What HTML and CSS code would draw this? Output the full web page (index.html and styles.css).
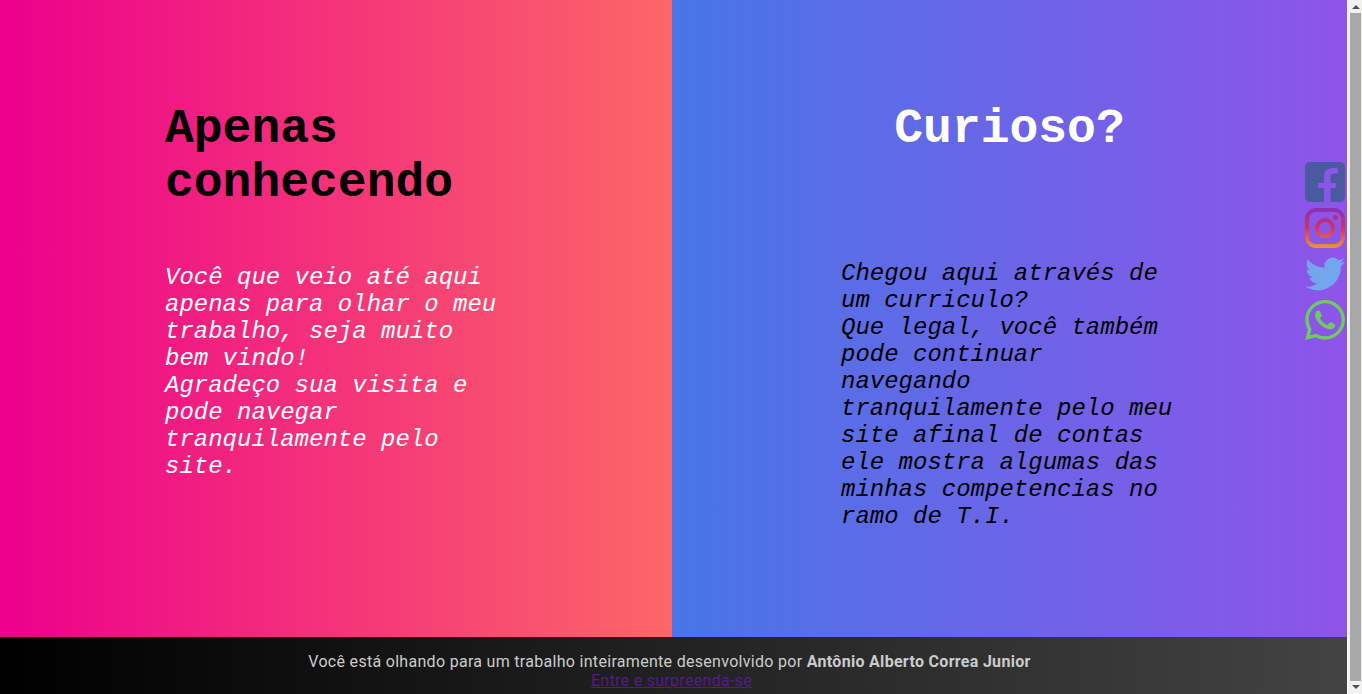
FILE: index.html
```html
<!DOCTYPE html>
<html lang="pt-BR">
<head>
<meta charset="utf-8">
<title>Antônio Alberto Correa Junior</title>
<link rel="stylesheet" href="styles.css">
</head>
<body>
<div class="page">
<main class="split">
  <section class="panel panel-left">
    <div class="block">
      <h1 class="title">Apenas conhecendo</h1>
      <p class="text text-light">Você que veio até aqui apenas para olhar o meu trabalho, seja muito bem vindo!<br>Agradeço sua visita e pode navegar tranquilamente pelo site.</p>
    </div>
  </section>
  <section class="panel panel-right">
    <div class="block">
      <h1 class="title title-light">Curioso?</h1>
      <p class="text text-dark">Chegou aqui através de um curriculo?<br>Que legal, você também pode continuar navegando tranquilamente pelo meu site afinal de contas ele mostra algumas das minhas competencias no ramo de T.I.</p>
    </div>
  </section>
</main>
<footer class="footer">
  <div class="footer-line">Você está olhando para um trabalho inteiramente desenvolvido por <strong>Antônio Alberto Correa Junior</strong></div>
  <a class="footer-link" href="#">Entre e surpreenda-se</a>
</footer>
</div>
<aside class="scrollbar" aria-hidden="true">
  <span class="arrow arrow-up"></span>
  <span class="thumb"></span>
  <span class="arrow arrow-down"></span>
</aside>
<nav class="social">
  <a class="social-link" href="#" aria-label="Facebook">
    <svg class="icon" viewBox="0 0 40 40"><path fill="#4a5a9e" fill-rule="evenodd" d="M5 0H35A5 5 0 0 1 40 5V35A5 5 0 0 1 35 40H25.5V26H30.5L31.3 21H25.5V15.5C25.5 13 26.5 11.5 29 11.5H33V6.3C31.5 6.1 30 6 28 6C22.8 6 19 9 19 15V21H13V26H19V40H5A5 5 0 0 1 0 35V5A5 5 0 0 1 5 0Z"/></svg>
  </a>
  <a class="social-link" href="#" aria-label="Instagram">
    <svg class="icon" viewBox="0 0 40 40">
      <defs><linearGradient id="ig" x1="0" y1="0" x2="0" y2="1"><stop offset="0" stop-color="#8a2fb5"/><stop offset=".5" stop-color="#d6305f"/><stop offset="1" stop-color="#e9953a"/></linearGradient></defs>
      <path fill="url(#ig)" fill-rule="evenodd" d="M11 0h18a11 11 0 0 1 11 11v18a11 11 0 0 1-11 11H11A11 11 0 0 1 0 29V11A11 11 0 0 1 11 0zm0 4a7 7 0 0 0-7 7v18a7 7 0 0 0 7 7h18a7 7 0 0 0 7-7V11a7 7 0 0 0-7-7zm9 6a10 10 0 1 1 0 20 10 10 0 0 1 0-20zm0 4a6 6 0 1 0 0 12 6 6 0 0 0 0-12zm10.5-7a2.5 2.5 0 1 1 0 5 2.5 2.5 0 0 1 0-5z"/>
    </svg>
  </a>
  <a class="social-link" href="#" aria-label="Twitter">
    <svg class="icon" viewBox="0 0 24 24"><path fill="#73a6ec" d="M23.953 4.57a10 10 0 01-2.825.775 4.958 4.958 0 002.163-2.723c-.951.555-2.005.959-3.127 1.184a4.92 4.92 0 00-8.384 4.482C7.69 8.095 4.067 6.13 1.64 3.162a4.822 4.822 0 00-.666 2.475c0 1.71.87 3.213 2.188 4.096a4.904 4.904 0 01-2.228-.616v.06a4.923 4.923 0 003.946 4.827 4.996 4.996 0 01-2.212.085 4.936 4.936 0 004.604 3.417 9.867 9.867 0 01-6.102 2.105c-.39 0-.779-.023-1.17-.067a13.995 13.995 0 007.557 2.209c9.053 0 13.998-7.496 13.998-13.985 0-.21 0-.42-.015-.63A9.935 9.935 0 0024 4.59z"/></svg>
  </a>
  <a class="social-link" href="#" aria-label="WhatsApp">
    <svg class="icon" viewBox="0 0 24 24"><path fill="#6dcb62" d="M17.472 14.382c-.297-.149-1.758-.867-2.03-.967-.273-.099-.471-.148-.67.15-.197.297-.767.966-.94 1.164-.173.199-.347.223-.644.075-.297-.15-1.255-.463-2.39-1.475-.883-.788-1.48-1.761-1.653-2.059-.173-.297-.018-.458.13-.606.134-.133.298-.347.446-.52.149-.174.198-.298.298-.497.099-.198.05-.371-.025-.52-.075-.149-.669-1.612-.916-2.207-.242-.579-.487-.5-.669-.51-.173-.008-.371-.01-.57-.01-.198 0-.52.074-.792.372-.272.297-1.04 1.016-1.04 2.479 0 1.462 1.065 2.875 1.213 3.074.149.198 2.096 3.2 5.077 4.487.709.306 1.262.489 1.694.625.712.227 1.36.195 1.871.118.571-.085 1.758-.719 2.006-1.413.248-.694.248-1.289.173-1.413-.074-.124-.272-.198-.57-.347m-5.421 7.403h-.004a9.87 9.87 0 01-5.031-1.378l-.361-.214-3.741.982.998-3.648-.235-.374a9.86 9.86 0 01-1.51-5.26c.001-5.45 4.436-9.884 9.888-9.884 2.64 0 5.122 1.03 6.988 2.898a9.825 9.825 0 012.893 6.994c-.003 5.45-4.437 9.884-9.885 9.884m8.413-18.297A11.815 11.815 0 0012.05 0C5.495 0 .16 5.335.157 11.892c0 2.096.547 4.142 1.588 5.945L.057 24l6.305-1.654a11.882 11.882 0 005.683 1.448h.005c6.554 0 11.89-5.335 11.893-11.893a11.821 11.821 0 00-3.48-8.413z"/></svg>
  </a>
</nav>
</body>
</html>
```
FILE: styles.css
```css
html, body { height: 100%; }
body { margin: 0; display: flex; overflow: hidden; font-family: "Liberation Mono", monospace; }
.page { flex: 1; min-width: 0; }
.split { display: flex; height: 637px; }
.panel { display: flex; justify-content: center; align-items: flex-start; }
.panel-left { width: 672px; background: linear-gradient(to right, #ec008c, #fc6767); }
.panel-right { flex: 1; background: linear-gradient(to right, #4776e6, #8e54e9); }
.block { width: 342px; }
.panel-right .block { width: 337px; }
.title { margin: 102px 0 0; font-size: 48px; font-weight: 700; color: #000; }
.title-light { color: #fff; text-align: center; }
.text { margin: 54px 0 0; font-size: 24px; line-height: 27px; font-style: italic; }
.panel-right .text { margin-top: 104px; }
.text-light { color: #fff; }
.text-dark { color: #000; }
.footer { height: 57px; box-sizing: border-box; padding: 15px 4px 0 0; background: linear-gradient(to right, #000, #434343); color: #ccc; text-align: center; font-family: Roboto, sans-serif; font-size: 16px; line-height: 19px; letter-spacing: .3px; }
.footer-line { padding-right: 4px; }
.footer-link { color: #551a8b; }
.scrollbar { flex: none; width: 15px; height: 694px; box-sizing: border-box; background: #f1f1f1; display: flex; flex-direction: column; align-items: center; border-left: 1px solid #fff; }
.thumb { flex: 1; width: 11px; margin: 4px 0 4px 1px; background: #a8a8a8; }
.arrow { flex: none; width: 0; height: 0; margin-left: 1px; border-left: 4px solid transparent; border-right: 4px solid transparent; }
.arrow-up { margin-top: 5px; border-bottom: 4px solid #505050; }
.arrow-down { margin-bottom: 5px; border-top: 4px solid #505050; }
.social { position: absolute; top: 162px; right: 17px; display: flex; flex-direction: column; gap: 6px; }
.social-link { display: block; width: 40px; height: 40px; }
.icon { display: block; width: 40px; height: 40px; }
```
